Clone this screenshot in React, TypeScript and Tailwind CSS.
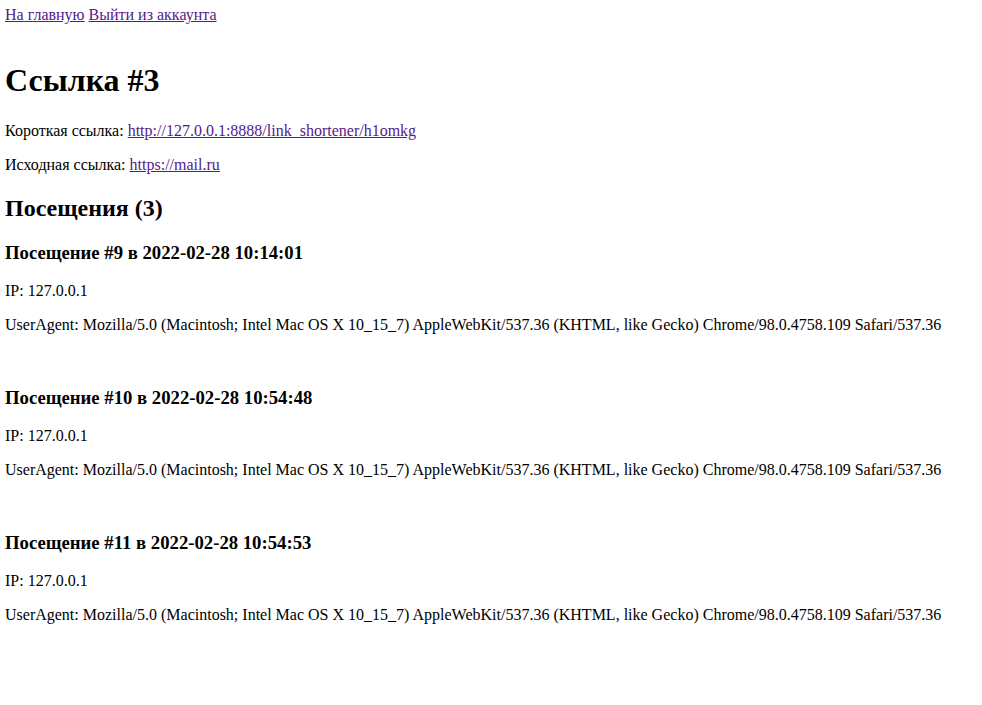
const visits = [
  { id: 9, at: "2022-02-28 10:14:01" },
  { id: 10, at: "2022-02-28 10:54:48" },
  { id: 11, at: "2022-02-28 10:54:53" },
]

const ua =
  "Mozilla/5.0 (Macintosh; Intel Mac OS X 10_15_7) AppleWebKit/537.36 (KHTML, like Gecko) Chrome/98.0.4758.109 Safari/537.36"

const linkCls = "text-[#551a8b] underline"

export default function App() {
  return (
    <div className="min-h-[705px] bg-white px-[5px] pt-[6px] font-['Liberation_Serif',serif] text-[16px] leading-[normal] text-black">
      <div>
        <a href="#" className={linkCls}>На главную</a>{" "}
        <a href="#" className={linkCls}>Выйти из аккаунта</a>
      </div>

      <h1 className="mt-[38px] text-[32px] font-bold">Ссылка #3</h1>
      <p className="mt-[23px]">
        Короткая ссылка:{" "}
        <a href="#" className={linkCls}>http://127.0.0.1:8888/link_shortener/h1omkg</a>
      </p>
      <p className="mt-4">
        Исходная ссылка: <a href="#" className={linkCls}>https://mail.ru</a>
      </p>

      <h2 className="mt-[21px] text-[24px] font-bold">Посещения (3)</h2>

      {visits.map((v, i) => (
        <div key={v.id}>
          <h3 className={i === 0 ? "mt-[20px] text-[18.72px] font-bold" : "mt-[53px] text-[18.72px] font-bold"}>
            Посещение #{v.id} в {v.at}
          </h3>
          <p className="mt-[18px]">IP: 127.0.0.1</p>
          <p className="mt-4">UserAgent: {ua}</p>
        </div>
      ))}
    </div>
  )
}
